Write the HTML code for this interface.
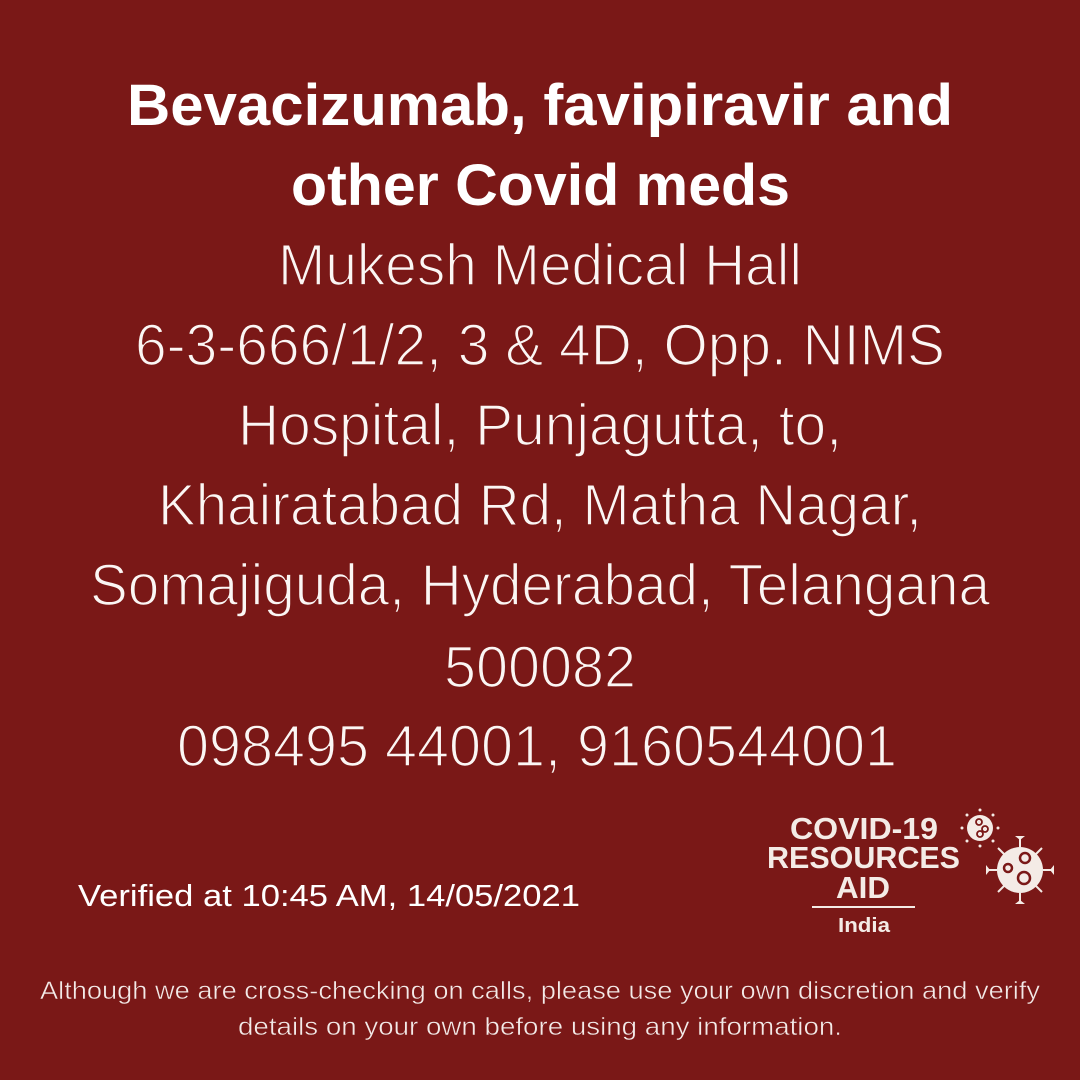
<!DOCTYPE html>
<html><head><meta charset="utf-8"><style>
html,body{margin:0;padding:0;background:#7a1817}
svg{display:block}
</style></head><body>
<svg width="1080" height="1080" viewBox="0 0 1080 1080" xmlns="http://www.w3.org/2000/svg">
<rect width="1080" height="1080" fill="#7a1817"/>
<g fill="#ffffff" font-family="Liberation Sans, sans-serif">
<g font-weight="bold" font-size="58">
<text x="127" y="125" textLength="826" lengthAdjust="spacingAndGlyphs">Bevacizumab, favipiravir and</text>
<text x="291" y="205" textLength="499" lengthAdjust="spacingAndGlyphs">other Covid meds</text>
</g>
<g font-size="58" fill="#fbf6f4" stroke="#7a1817" stroke-width="1.6">
<text x="278" y="285" textLength="524" lengthAdjust="spacingAndGlyphs">Mukesh Medical Hall</text>
<text x="135" y="365" textLength="810" lengthAdjust="spacingAndGlyphs">6-3-666/1/2, 3 &amp; 4D, Opp. NIMS</text>
<text x="238" y="445" textLength="604" lengthAdjust="spacingAndGlyphs">Hospital, Punjagutta, to,</text>
<text x="158" y="525" textLength="764" lengthAdjust="spacingAndGlyphs">Khairatabad Rd, Matha Nagar,</text>
<text x="90" y="605" textLength="900" lengthAdjust="spacingAndGlyphs">Somajiguda, Hyderabad, Telangana</text>
<text x="444" y="687" textLength="192" lengthAdjust="spacingAndGlyphs">500082</text>
<text x="177" y="766" textLength="720" lengthAdjust="spacingAndGlyphs">098495 44001, 9160544001</text>
</g>
<text x="78" y="906" font-size="31" textLength="502" lengthAdjust="spacingAndGlyphs">Verified at 10:45 AM, 14/05/2021</text>
<g font-size="25" fill="#f3eae8" stroke="#7a1817" stroke-width="0.5">
<text x="40" y="999" textLength="1000" lengthAdjust="spacingAndGlyphs">Although we are cross-checking on calls, please use your own discretion and verify</text>
<text x="238" y="1035" textLength="604" lengthAdjust="spacingAndGlyphs">details on your own before using any information.</text>
</g>
<g font-weight="bold" fill="#f4ebe6" font-size="31">
<text x="790" y="839" textLength="148" lengthAdjust="spacingAndGlyphs">COVID-19</text>
<text x="767" y="868" textLength="193" lengthAdjust="spacingAndGlyphs">RESOURCES</text>
<text x="836" y="898" textLength="54" lengthAdjust="spacingAndGlyphs">AID</text>
<rect x="812" y="906" width="103" height="2"/>
<text x="838" y="932" font-size="20" textLength="52" lengthAdjust="spacingAndGlyphs">India</text>
</g>
</g>
<g fill="#f4ebe6" stroke="none">
<circle cx="980" cy="828" r="13"/>
<circle cx="979" cy="822" r="3" fill="none" stroke="#7a1817" stroke-width="1.8"/>
<circle cx="985" cy="829" r="3" fill="none" stroke="#7a1817" stroke-width="1.8"/>
<circle cx="980" cy="834" r="3" fill="none" stroke="#7a1817" stroke-width="1.8"/>
<circle cx="980" cy="810" r="1.5"/><circle cx="980" cy="846" r="1.5"/>
<circle cx="962" cy="828" r="1.5"/><circle cx="998" cy="828" r="1.5"/>
<circle cx="967" cy="815" r="1.5"/><circle cx="993" cy="841" r="1.5"/>
<circle cx="967" cy="841" r="1.5"/><circle cx="993" cy="815" r="1.5"/>
<circle cx="1020" cy="870" r="23"/>
<circle cx="1025" cy="858" r="5" fill="none" stroke="#7a1817" stroke-width="2.5"/>
<circle cx="1008" cy="868" r="4" fill="none" stroke="#7a1817" stroke-width="2.5"/>
<circle cx="1024" cy="878" r="6" fill="none" stroke="#7a1817" stroke-width="2.5"/>
<g stroke="#f4ebe6" stroke-width="2">
<line x1="1020" y1="847" x2="1020" y2="838"/><line x1="1020" y1="893" x2="1020" y2="902"/>
<line x1="997" y1="870" x2="988" y2="870"/><line x1="1043" y1="870" x2="1052" y2="870"/>
<line x1="1004" y1="854" x2="998" y2="848"/><line x1="1036" y1="886" x2="1042" y2="892"/>
<line x1="1004" y1="886" x2="998" y2="892"/><line x1="1036" y1="854" x2="1042" y2="848"/>
</g>
<path d="M1015 836h10l-5 4zM1015 904h10l-5-4zM986 865v10l4-5zM1054 865v10l-4-5z"/>
</g>
</svg>
</body></html>
